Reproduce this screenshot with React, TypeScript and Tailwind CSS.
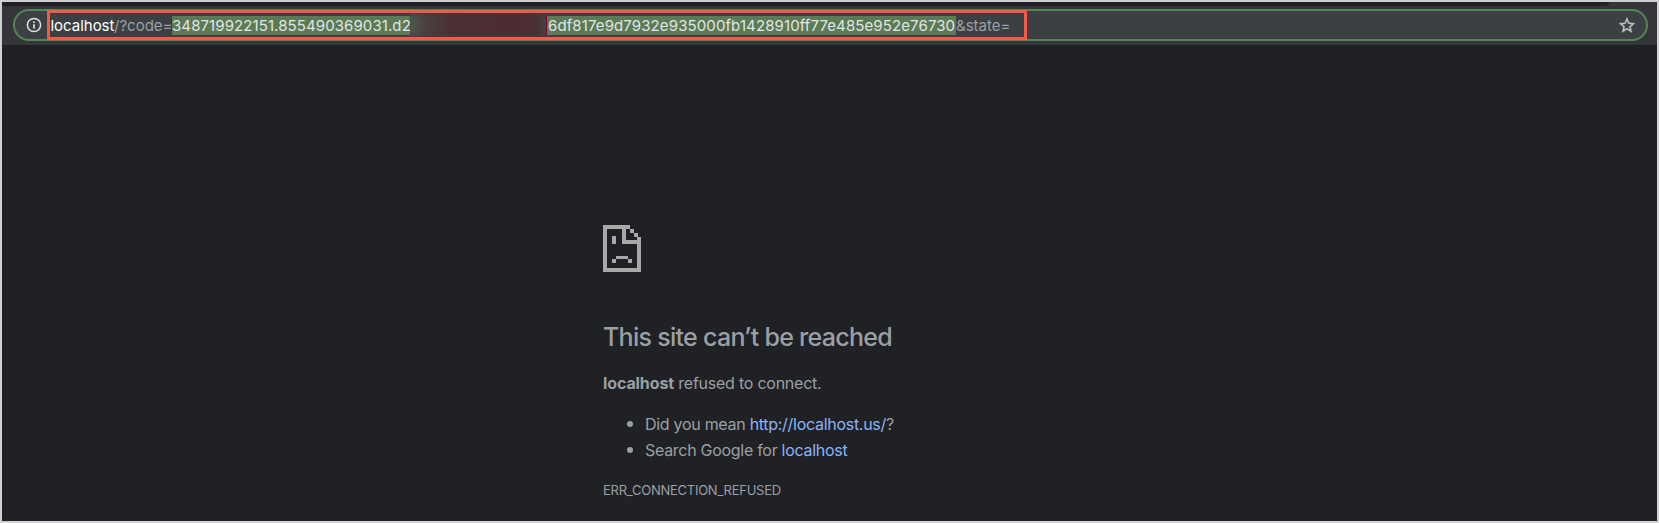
function InfoIcon() {
  return (
    <svg className="block h-4 w-4 shrink-0" viewBox="0 0 16 16" fill="none">
      <circle cx="8" cy="8" r="6.6" stroke="#dfe1e5" strokeWidth="1.5" />
      <path d="M8 7.2v4.2M8 4.4v1.6" stroke="#dfe1e5" strokeWidth="1.7" />
    </svg>
  );
}

function StarIcon() {
  return (
    <svg className="block h-4 w-4 shrink-0" viewBox="0 0 24 24" fill="#bfc3c9" stroke="#bfc3c9" strokeWidth="0.5">
      <path d="M24 9.2l-8.6-.7L12 .5 8.600 8.500 0 9.200l6.500 5.700L4.600 23.400 12 18.900l7.400 4.500-1.900-8.500L24 9.200zM12 16.600l-4.500 2.700 1.200-5.100-4-3.500 5.200-.4L12 5.400l2.100 4.900 5.200.4-4 3.500 1.200 5.100L12 16.600z" />
    </svg>
  );
}

function SadPageIcon() {
  return (
    <svg
      className="block h-[47px] w-[38px]"
      viewBox="39 44 114 141"
      preserveAspectRatio="none"
      shapeRendering="crispEdges"
      fill="#a9a9a9"
    >
      <path d="M39 44H120V56H109V90H141V79H153V185H39ZM51 56V173H141V101H97V56Z" fillRule="evenodd" />
      <path d="M120 56h12v12h-12zM132 67h12v12h-12zM66 78h12v23H66zM78 136h36v11H78zM66 147h12v12H66zM114 147h12v12h-12z" />
    </svg>
  );
}

function AddressBar() {
  return (
    <div className="flex h-[39px] bg-[#35363a] pt-[3px] pr-[9px] pl-[11px]">
      <div className="flex h-8 w-full items-center rounded-full border-2 border-[#558752] bg-[#3c4043] pr-[11px] pl-[11px]">
        <InfoIcon />
        <div className="ml-[5px] flex h-[30px] w-[980px] shrink-0 items-center border-[3px] border-[#f55a48] text-[15px] whitespace-nowrap">
          <span className="h-[19px] w-[64px] pl-[0.5px] leading-[19px] tracking-[-0.02px] text-white">localhost</span>
          <span className="h-[19px] w-[58px] leading-[19px] text-[#9aa0a6]">/?code=</span>
          <span className="h-[19px] w-[238px] overflow-hidden bg-[#5c7a54] leading-[19px] tracking-[0.09px] text-[#e0e5ea]">
            348719922151.855490369031.d2
          </span>
          <span className="h-6 w-[136px] bg-[linear-gradient(90deg,#4c5a4c_0%,#4b3f3f_12%,#4b3035_30%,#4d2b34_80%,#493237_94%,#494342_100%)] shadow-[inset_0_4px_5px_-3px_#3f3b40,inset_0_-4px_5px_-3px_#3f3b40]" />
          <span className="h-[19px] w-[410px] border-l border-[#7b0026] bg-[#5c7a54] pl-px leading-[19px] tracking-[0.11px] text-[#e0e5ea]">
            6df817e9d7932e935000fb1428910ff77e485e952e76730
          </span>
          <span className="h-[19px] leading-[19px] text-[#9aa0a6]">&amp;state=</span>
        </div>
        <div className="ml-auto">
          <StarIcon />
        </div>
      </div>
    </div>
  );
}

function Bullet() {
  return <span className="mr-[12px] size-[6px] rounded-full bg-[#9aa0a6]" />;
}

export default function App() {
  return (
    <div className="h-[523px] w-[1659px] overflow-hidden border-2 border-[#d0d1d2] bg-[#202124] font-['Inter','Liberation_Sans',sans-serif]">
      <div className="h-1 bg-[#35363a]">
        <div className="h-1 w-[1607px] rounded-br-[4px] bg-[#202124]" />
      </div>
      <AddressBar />
      <main className="pt-[180px] pl-[601px] text-[16px] text-[#9aa0a6]">
        <SadPageIcon />
        <h1 className="mt-[48px] text-[25px] leading-[34px] font-medium tracking-[-0.72px]">This site can’t be reached</h1>
        <p className="mt-[16px] leading-[26px] tracking-[-0.24px]">
          <strong className="font-bold tracking-[-0.1px]">localhost</strong> refused to connect.
        </p>
        <ul className="mt-[15px] pl-[24px] leading-[26px] tracking-[-0.29px]">
          <li className="flex items-center">
            <Bullet />
            <span>
              Did you mean <span className="text-[#8ab4f8]">http://localhost.us/</span>?
            </span>
          </li>
          <li className="flex items-center">
            <Bullet />
            <span>
              Search Google for <span className="text-[#8ab4f8]">localhost</span>
            </span>
          </li>
        </ul>
        <p className="mt-[17px] text-[13px] leading-5 tracking-[-0.25px]">ERR_CONNECTION_REFUSED</p>
      </main>
    </div>
  );
}
